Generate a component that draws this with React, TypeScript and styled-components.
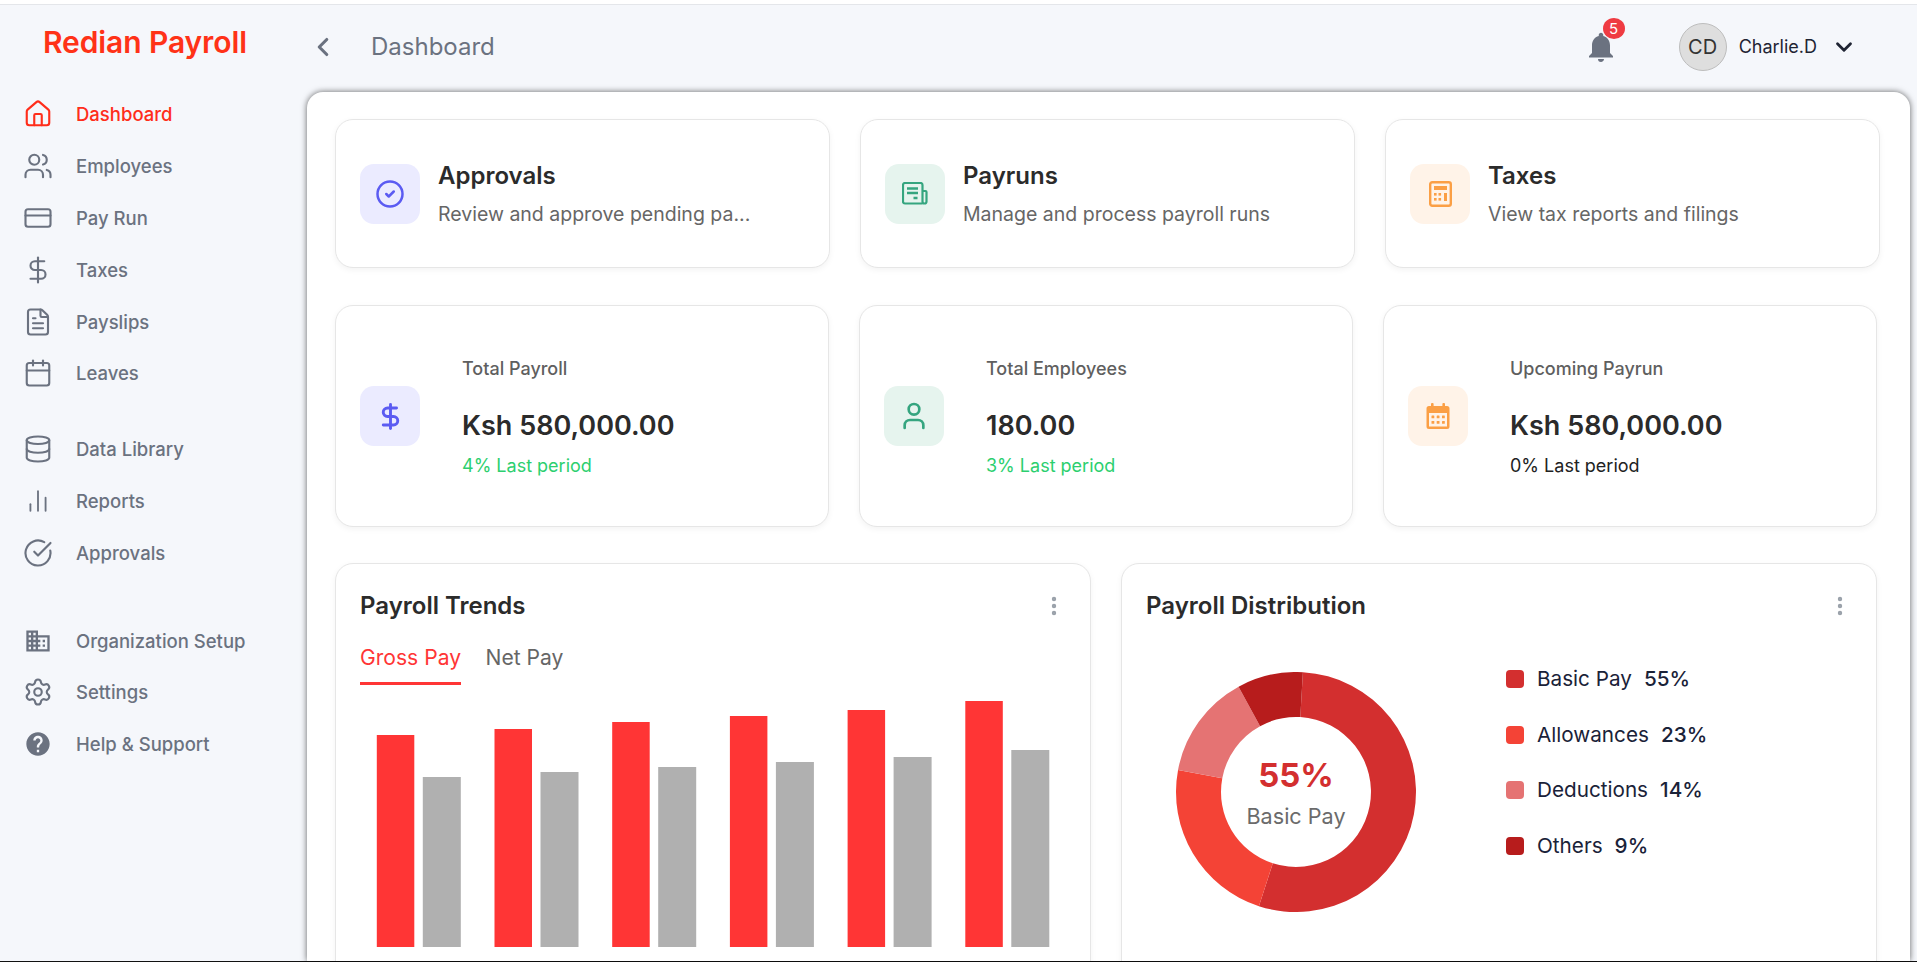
import React, { ReactElement, ReactNode } from 'react'
import styled, { createGlobalStyle } from 'styled-components'
import {
  Calendar,
  ChartNoAxesColumn,
  ChevronDown,
  ChevronLeft,
  CircleCheck,
  CircleCheckBig,
  CreditCard,
  Database,
  DollarSign,
  EllipsisVertical,
  FileText,
  House,
  Settings,
  User,
  Users,
} from 'lucide-react'
import { MdDomain, MdHelp, MdNotifications } from 'react-icons/md'

const GREY = '#6b7280'
const RED = '#ff3535'

const GlobalStyle = createGlobalStyle`
  html, body {
    margin: 0;
    height: 100%;
    overflow: hidden;
    background: #fff;
  }
  body, button {
    font-family: Inter, "Noto Sans", sans-serif;
  }
  #root {
    height: 100%;
  }
`

const Page = styled.div`
  height: 962px;
  box-sizing: border-box;
  padding-top: 4px;
  border-bottom: 1px solid #111;
  display: flex;
  flex-direction: column;
`

const Shell = styled.div`
  flex: 1;
  min-height: 0;
  display: flex;
  background: #f5f7fb;
  border-top: 1px solid #e4e6ea;
`

const Sidebar = styled.aside`
  width: 307px;
  flex-shrink: 0;
`

const Logo = styled.div`
  height: 74px;
  padding-left: 43px;
  display: flex;
  align-items: center;
  color: #ff3217;
  font-size: 30px;
  font-weight: 600;
  letter-spacing: -0.1px;
`

const NavGroup = styled.nav<{ $gap: number }>`
  margin-top: ${(p) => p.$gap}px;
`

const NavItem = styled.a<{ $active?: boolean }>`
  height: 51.8px;
  padding-left: 23px;
  display: flex;
  align-items: center;
  gap: 23px;
  color: ${(p) => (p.$active ? '#ff2d1a' : GREY)};
  font-size: 18.5px;
  font-weight: 500;
`

const NavIcon = styled.span`
  width: 30px;
  height: 30px;
  display: flex;
  align-items: center;
  justify-content: center;
`

const Content = styled.div`
  flex: 1;
  min-width: 0;
  display: flex;
  flex-direction: column;
  padding-right: 7px;
`

const Header = styled.header`
  height: 87px;
  flex-shrink: 0;
  box-sizing: border-box;
  padding: 0 53px 4px 1px;
  display: flex;
  align-items: center;
  color: ${GREY};
`

const PageTitle = styled.div`
  margin-left: 33px;
  font-size: 24px;
`

const HeaderRight = styled.div`
  margin-left: auto;
  display: flex;
  align-items: center;
`

const BellWrap = styled.div`
  position: relative;
  width: 36px;
  height: 36px;
  margin-right: 60px;
`

const Badge = styled.span`
  position: absolute;
  top: -11px;
  left: 20px;
  width: 22px;
  height: 21px;
  border-radius: 50%;
  background: #ef3b42;
  color: #fff;
  font-size: 15px;
  display: flex;
  align-items: center;
  justify-content: center;
`

const Avatar = styled.div`
  width: 48px;
  height: 48px;
  box-sizing: border-box;
  border-radius: 50%;
  border: 1px solid #bdbdbd;
  background: #dedede;
  color: #333;
  font-size: 20px;
  display: flex;
  align-items: center;
  justify-content: center;
`

const UserName = styled.div`
  margin: 0 14px 0 12px;
  color: #1f2433;
  font-size: 18px;
`

const Panel = styled.main`
  flex: 1;
  min-height: 0;
  overflow: hidden;
  box-sizing: border-box;
  padding: 27px 30.5px 0 28px;
  background: #fff;
  border-radius: 16px 16px 0 0;
  box-shadow: 0 0 6px rgba(0, 0, 0, 0.6);
`

const QuickRow = styled.section`
  display: grid;
  grid-template-columns: repeat(3, 1fr);
  gap: 30.5px;
`

const StatRow = styled(QuickRow)`
  margin: 37px 3px 36px 0;
`

const Card = styled.div`
  box-sizing: border-box;
  background: #fff;
  border: 1px solid #e6e6e6;
  border-radius: 18px;
  box-shadow: 0 2px 6px rgba(0, 0, 0, 0.05);
`

const QuickCard = styled(Card)`
  height: 149px;
  padding-left: 24px;
  display: flex;
  align-items: center;
  gap: 18px;
`

const StatCard = styled(Card)`
  height: 222px;
  padding-left: 24px;
  display: flex;
  align-items: center;
  gap: 42px;
`

const IconTile = styled.div<{ $bg: string; $fg: string }>`
  width: 60px;
  height: 60px;
  flex-shrink: 0;
  border-radius: 14px;
  background: ${(p) => p.$bg};
  color: ${(p) => p.$fg};
  display: flex;
  align-items: center;
  justify-content: center;
`

const QuickTitle = styled.div`
  color: #2b2b2b;
  font-size: 24px;
  line-height: 30px;
  font-weight: 600;
`

const QuickDesc = styled.div`
  margin-top: 10px;
  color: #666;
  font-size: 19.5px;
  line-height: 26px;
  white-space: nowrap;
`

const StatText = styled.div`
  padding-top: 2px;
`

const StatLabel = styled.div`
  color: #5f5f5f;
  font-size: 18px;
  line-height: 24px;
  font-weight: 500;
`

const StatValue = styled.div`
  margin-top: 27px;
  color: #2b2b2b;
  font-size: 27px;
  line-height: 36px;
  font-weight: 600;
`

const StatNote = styled.div<{ $color: string }>`
  margin-top: 10px;
  color: ${(p) => p.$color};
  font-size: 18px;
  line-height: 24px;
`

const ChartRow = styled.section`
  margin-right: 3px;
  display: grid;
  grid-template-columns: 1fr 1fr;
  gap: 30.5px;
`

const ChartCard = styled(Card)`
  height: 500px;
  padding: 27px 24px 0;
`

const ChartHeader = styled.div`
  display: flex;
  align-items: center;
  justify-content: space-between;
  color: #2b2b2b;
  font-size: 24px;
  line-height: 30px;
  font-weight: 600;
`

const Tabs = styled.div`
  margin-top: 24px;
  display: flex;
  gap: 24.5px;
`

const Tab = styled.div<{ $active?: boolean }>`
  padding-bottom: 11px;
  border-bottom: 3px solid ${(p) => (p.$active ? RED : 'transparent')};
  color: ${(p) => (p.$active ? RED : '#666')};
  font-size: 21.1px;
  line-height: 26px;
`

const BarChart = styled.svg`
  display: block;
`

const DonutBody = styled.div`
  margin-top: 45px;
  padding-left: 30px;
  display: flex;
  align-items: flex-start;
  gap: 90px;
`

const DonutWrap = styled.div`
  position: relative;
  width: 240px;
  height: 240px;
  margin-top: 6px;
`

const DonutCenter = styled.div`
  position: absolute;
  inset: 0;
  display: flex;
  flex-direction: column;
  align-items: center;
  justify-content: center;
`

const DonutValue = styled.div`
  color: #d32f2f;
  font-size: 33px;
  line-height: 40px;
  font-weight: 700;
`

const DonutLabel = styled.div`
  margin-top: 8px;
  color: #6b6b6b;
  font-size: 21.6px;
  line-height: 26px;
`

const Legend = styled.div`
  display: flex;
  flex-direction: column;
  gap: 29.7px;
`

const LegendRow = styled.div`
  display: flex;
  align-items: center;
  color: #1a2238;
  font-size: 20.7px;
  line-height: 26px;
`

const Swatch = styled.span<{ $color: string }>`
  width: 18px;
  height: 18px;
  margin-right: 13px;
  border-radius: 4px;
  background: ${(p) => p.$color};
`

const LegendValue = styled.span`
  margin-left: 12px;
  font-weight: 500;
`

const NewspaperIcon = (): ReactElement => (
  <svg width="26" height="23" viewBox="0 0 26 23" fill="none" stroke="currentColor" strokeWidth="2.2">
    <path d="M20.5 21.5H3a2 2 0 0 1-2-2V3a2 2 0 0 1 2-2h15.5a2 2 0 0 1 2 2v16.5a2 2 0 0 0 4 0V10a1 1 0 0 0-1-1h-3" />
    <path d="M5 6.5h11M5 11h11M11.5 16h4" strokeWidth="2.4" />
  </svg>
)

const CalculatorIcon = (): ReactElement => (
  <svg width="23" height="26" viewBox="0 0 23 26" fill="currentColor">
    <rect x="1.2" y="1.2" width="20.6" height="23.6" rx="2" fill="none" stroke="currentColor" strokeWidth="2.4" />
    <rect x="5" y="5" width="13" height="4" />
    {[5, 9.5].map((x) => (
      <React.Fragment key={x}>
        <rect x={x} y="12" width="2.6" height="2.6" />
        <rect x={x} y="17" width="2.6" height="2.6" />
      </React.Fragment>
    ))}
    <rect x="15" y="12" width="3" height="8" />
  </svg>
)

const CalendarDotsIcon = (): ReactElement => (
  <svg width="24" height="26" viewBox="0 0 24 26" fill="currentColor">
    <rect x="5" y="0" width="2.6" height="5" rx="1" />
    <rect x="16.4" y="0" width="2.6" height="5" rx="1" />
    <path d="M3 3h18a2.5 2.5 0 0 1 2.5 2.5v18A2.5 2.5 0 0 1 21 26H3a2.5 2.5 0 0 1-2.5-2.5v-18A2.5 2.5 0 0 1 3 3zm0 7v13.5h18V10H3z" fillRule="evenodd" />
    {[5.5, 10.7, 16].map((x) => (
      <React.Fragment key={x}>
        <rect x={x} y="12.5" width="2.8" height="2.8" rx="0.5" />
        <rect x={x} y="18" width="2.8" height="2.8" rx="0.5" />
      </React.Fragment>
    ))}
  </svg>
)

const STROKE = 1.7

const navGroups: { gap: number; items: { label: string; icon: ReactNode; active?: boolean }[] }[] = [
  {
    gap: 9.5,
    items: [
      { label: 'Dashboard', icon: <House size={30} strokeWidth={STROKE} />, active: true },
      { label: 'Employees', icon: <Users size={30} strokeWidth={STROKE} /> },
      { label: 'Pay Run', icon: <CreditCard size={32} strokeWidth={STROKE} /> },
      { label: 'Taxes', icon: <DollarSign size={30} strokeWidth={STROKE} /> },
      { label: 'Payslips', icon: <FileText size={30} strokeWidth={STROKE} /> },
      { label: 'Leaves', icon: <Calendar size={30} strokeWidth={STROKE} /> },
    ],
  },
  {
    gap: 24,
    items: [
      { label: 'Data Library', icon: <Database size={30} strokeWidth={STROKE} /> },
      { label: 'Reports', icon: <ChartNoAxesColumn size={26} strokeWidth={STROKE} /> },
      { label: 'Approvals', icon: <CircleCheckBig size={30} strokeWidth={STROKE} /> },
    ],
  },
  {
    gap: 36,
    items: [
      { label: 'Organization Setup', icon: <MdDomain size={28} /> },
      { label: 'Settings', icon: <Settings size={30} strokeWidth={STROKE} /> },
      { label: 'Help & Support', icon: <MdHelp size={28} /> },
    ],
  },
]

const PURPLE = { bg: '#ebebff', fg: '#5b5bf2' }
const GREEN = { bg: '#e6f4ee', fg: '#35a57f' }
const ORANGE = { bg: '#fff3e8', fg: '#fb9f45' }

const quickCards = [
  { title: 'Approvals', desc: 'Review and approve pending pa...', tone: PURPLE, icon: <CircleCheck size={30} strokeWidth={2} /> },
  { title: 'Payruns', desc: 'Manage and process payroll runs', tone: GREEN, icon: <NewspaperIcon /> },
  { title: 'Taxes', desc: 'View tax reports and filings', tone: ORANGE, icon: <CalculatorIcon /> },
]

const stats = [
  { label: 'Total Payroll', value: 'Ksh 580,000.00', note: '4% Last period', noteColor: '#2ccf6f', tone: PURPLE, icon: <DollarSign size={29} strokeWidth={2.4} /> },
  { label: 'Total Employees', value: '180.00', note: '3% Last period', noteColor: '#2ccf6f', tone: GREEN, icon: <User size={32} strokeWidth={2} /> },
  { label: 'Upcoming Payrun', value: 'Ksh 580,000.00', note: '0% Last period', noteColor: '#222', tone: ORANGE, icon: <CalendarDotsIcon /> },
]

const grossHeights = [212, 218, 225, 231, 237, 246]
const netHeights = [170, 175, 180, 185, 190, 197]

const CHART_H = 262

// end = clockwise angle where the slice stops, the first one starts a bit past 12 o'clock
const slices = [
  { label: 'Basic Pay', value: 55, color: '#d32f2f', end: 198 },
  { label: 'Allowances', value: 23, color: '#f44336', end: 280.6 },
  { label: 'Deductions', value: 14, color: '#e57373', end: 331.4 },
  { label: 'Others', value: 9, color: '#b71c1c', end: 363.3 },
]

const polar = (r: number, deg: number): string => {
  const a = (deg * Math.PI) / 180
  return `${(120 + r * Math.sin(a)).toFixed(2)} ${(120 - r * Math.cos(a)).toFixed(2)}`
}

const slicePath = (start: number, end: number): string => {
  const large = end - start > 180 ? 1 : 0
  return `M${polar(120, start)}A120 120 0 ${large} 1 ${polar(120, end)}L${polar(75, end)}A75 75 0 ${large} 0 ${polar(75, start)}Z`
}

const Donut = (): ReactElement => (
  <svg width="240" height="240" viewBox="0 0 240 240">
    {slices.map((s, i) => (
      <path key={s.label} d={slicePath(i === 0 ? 3.3 : slices[i - 1].end, s.end)} fill={s.color} />
    ))}
  </svg>
)

const App = (): ReactElement => (
  <Page>
    <GlobalStyle />
    <Shell>
      <Sidebar>
        <Logo>Redian Payroll</Logo>
        {navGroups.map((group) => (
          <NavGroup key={group.items[0].label} $gap={group.gap}>
            {group.items.map((item) => (
              <NavItem key={item.label} $active={item.active}>
                <NavIcon>{item.icon}</NavIcon>
                {item.label}
              </NavItem>
            ))}
          </NavGroup>
        ))}
      </Sidebar>
      <Content>
        <Header>
          <ChevronLeft size={30} strokeWidth={2.5} />
          <PageTitle>Dashboard</PageTitle>
          <HeaderRight>
            <BellWrap>
              <MdNotifications size={36} />
              <Badge>5</Badge>
            </BellWrap>
            <Avatar>CD</Avatar>
            <UserName>Charlie.D</UserName>
            <ChevronDown size={26} strokeWidth={2.6} color="#1f2433" />
          </HeaderRight>
        </Header>
        <Panel>
          <QuickRow>
            {quickCards.map((c) => (
              <QuickCard key={c.title}>
                <IconTile $bg={c.tone.bg} $fg={c.tone.fg}>
                  {c.icon}
                </IconTile>
                <div>
                  <QuickTitle>{c.title}</QuickTitle>
                  <QuickDesc>{c.desc}</QuickDesc>
                </div>
              </QuickCard>
            ))}
          </QuickRow>
          <StatRow>
            {stats.map((s) => (
              <StatCard key={s.label}>
                <IconTile $bg={s.tone.bg} $fg={s.tone.fg}>
                  {s.icon}
                </IconTile>
                <StatText>
                  <StatLabel>{s.label}</StatLabel>
                  <StatValue>{s.value}</StatValue>
                  <StatNote $color={s.noteColor}>{s.note}</StatNote>
                </StatText>
              </StatCard>
            ))}
          </StatRow>
          <ChartRow>
            <ChartCard>
              <ChartHeader>
                Payroll Trends
                <EllipsisVertical size={24} strokeWidth={2.4} color="#9aa1aa" />
              </ChartHeader>
              <Tabs>
                <Tab $active>Gross Pay</Tab>
                <Tab>Net Pay</Tab>
              </Tabs>
              <BarChart width="700" height={CHART_H} viewBox={`0 0 700 ${CHART_H}`}>
                {grossHeights.map((h, i) => (
                  <React.Fragment key={h}>
                    <rect x={16.8 + i * 117.7} y={CHART_H - h} width="37.5" height={h} fill={RED} />
                    <rect x={62.8 + i * 117.7} y={CHART_H - netHeights[i]} width="38" height={netHeights[i]} fill="#b0b0b0" />
                  </React.Fragment>
                ))}
              </BarChart>
            </ChartCard>
            <ChartCard>
              <ChartHeader>
                Payroll Distribution
                <EllipsisVertical size={24} strokeWidth={2.4} color="#9aa1aa" />
              </ChartHeader>
              <DonutBody>
                <DonutWrap>
                  <Donut />
                  <DonutCenter>
                    <DonutValue>55%</DonutValue>
                    <DonutLabel>Basic Pay</DonutLabel>
                  </DonutCenter>
                </DonutWrap>
                <Legend>
                  {slices.map((s) => (
                    <LegendRow key={s.label}>
                      <Swatch $color={s.color} />
                      {s.label}
                      <LegendValue>{s.value}%</LegendValue>
                    </LegendRow>
                  ))}
                </Legend>
              </DonutBody>
            </ChartCard>
          </ChartRow>
        </Panel>
      </Content>
    </Shell>
  </Page>
)

export default App
